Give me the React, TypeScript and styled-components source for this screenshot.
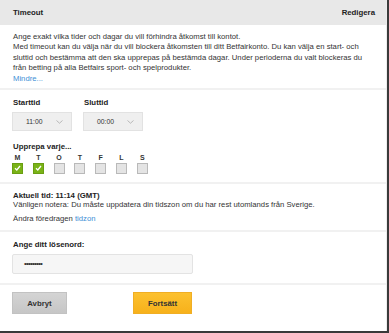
import React from "react";
import styled, { createGlobalStyle } from "styled-components";

const Global = createGlobalStyle`
  html, body { margin: 0; padding: 0; background: #fff; }
  body { font-family: "Liberation Sans", Arial, sans-serif; color: #222; }
`;

const Frame = styled.div`
  box-sizing: border-box;
  width: 389px;
  height: 333px;
  background: #fff;
  border-right: 2px solid #3a3a3a;
  border-bottom: 2px solid #3a3a3a;
  overflow: hidden;
`;

const Panel = styled.div`
  box-sizing: border-box;
  height: 100%;
  border-right: 1px solid #ececec;
`;

const Header = styled.div`
  box-sizing: border-box;
  height: 25px;
  background: #e8e8e8;
  display: flex;
  align-items: center;
  justify-content: space-between;
  padding: 0 11px 0 13px;
  font-size: 7.8px;
  font-weight: bold;
  color: #222;
`;

const Section = styled.div<{ $pt: number; $pb: number; $last?: boolean }>`
  padding: ${(p) => p.$pt}px 4px ${(p) => p.$pb}px 13px;
  border-bottom: ${(p) => (p.$last ? "none" : "2px solid #f1f1f1")};
`;

const Para = styled.p<{ $mt?: number }>`
  margin: ${(p) => p.$mt ?? 0}px 0 0 0;
  font-size: 7.7px;
  line-height: 10.5px;
  color: #333;
  white-space: nowrap;
`;

const Link = styled.a`
  color: #3d8fd6;
  text-decoration: none;
`;

const Label = styled.div<{ $mt?: number; $ml?: number }>`
  margin-top: ${(p) => p.$mt ?? 0}px;
  margin-left: ${(p) => p.$ml ?? 0}px;
  font-size: 7.8px;
  line-height: 9px;
  font-weight: bold;
  color: #222;
`;

const FieldRow = styled.div`
  display: flex;
  gap: 11px;
  margin-left: -1px;
`;

const Field = styled.div`
  display: flex;
  flex-direction: column;
  gap: 5.5px;
`;

const Select = styled.div`
  box-sizing: border-box;
  width: 60px;
  height: 19px;
  background: #efefef;
  border: 1px solid #e2e2e2;
  display: flex;
  align-items: center;
  justify-content: space-between;
  padding: 0 8px 0 13px;
  font-size: 6.8px;
  color: #333;
`;

const Days = styled.div`
  display: flex;
  gap: 9.8px;
  margin-top: 3px;
  margin-left: -1px;
`;

const Day = styled.div`
  width: 11px;
  display: flex;
  flex-direction: column;
  align-items: center;
  gap: 1px;
  font-size: 7px;
  line-height: 8px;
  font-weight: bold;
  color: #333;
`;

const Box = styled.div<{ $on?: boolean }>`
  box-sizing: border-box;
  width: 11px;
  height: 11px;
  background: ${(p) => (p.$on ? "#7ab317" : "#e4e4e4")};
  border: 1px solid ${(p) => (p.$on ? "#6a9e12" : "#b9b9b9")};
  display: flex;
  align-items: center;
  justify-content: center;
`;

const Input = styled.div`
  box-sizing: border-box;
  width: 181px;
  height: 20px;
  margin-top: 5px;
  margin-left: -1px;
  background: #f6f6f6;
  border: 1px solid #e3e3e3;
  border-radius: 2px;
  display: flex;
  align-items: center;
  padding-left: 11px;
  font-size: 8px;
  letter-spacing: -0.8px;
  color: #333;
`;

const Buttons = styled.div`
  display: flex;
  gap: 66px;
  margin-left: -1px;
`;

const Button = styled.div<{ $primary?: boolean }>`
  box-sizing: border-box;
  height: 22px;
  width: ${(p) => (p.$primary ? 59 : 55)}px;
  display: flex;
  align-items: center;
  justify-content: center;
  font-size: 7.8px;
  font-weight: bold;
  color: #333;
  background: ${(p) =>
    p.$primary
      ? "linear-gradient(#fcc12f, #f7b11b)"
      : "linear-gradient(#d4d4d4, #c6c6c6)"};
  border: 1px solid ${(p) => (p.$primary ? "#f0ae25" : "#c2c2c2")};
`;

const Chevron = () => (
  <svg width="7" height="4" viewBox="0 0 7 4">
    <path d="M0.5 0.5 L3.5 3.2 L6.5 0.5" stroke="#aaa" strokeWidth="0.8" fill="none" />
  </svg>
);

const Check = () => (
  <svg width="7" height="6" viewBox="0 0 7 6">
    <path d="M1 3.3 L2.8 5 L6 1" stroke="#fff" strokeWidth="1.3" fill="none" />
  </svg>
);

const days = [
  { l: "M", on: true },
  { l: "T", on: true },
  { l: "O" },
  { l: "T" },
  { l: "F" },
  { l: "L" },
  { l: "S" },
];

export default function App() {
  return (
    <>
      <Global />
      <Frame>
        <Panel>
          <Header>
            <span>Timeout</span>
            <span>Redigera</span>
          </Header>
          <Section $pt={6.5} $pb={4}>
            <Para>
              Ange exakt vilka tider och dagar du vill förhindra åtkomst till kontot.
              <br />
              Med timeout kan du välja när du vill blockera åtkomsten till ditt Betfairkonto. Du kan välja en start- och
              <br />
              sluttid och bestämma att den ska upprepas på bestämda dagar. Under perioderna du valt blockeras du
              <br />
              från betting på alla Betfairs sport- och spelprodukter.
              <br />
              <Link>Mindre...</Link>
            </Para>
          </Section>
          <Section $pt={7.5} $pb={8.5}>
            <FieldRow>
              <Field>
                <Label $ml={1}>Starttid</Label>
                <Select>
                  <span>11:00</span>
                  <Chevron />
                </Select>
              </Field>
              <Field>
                <Label $ml={1}>Sluttid</Label>
                <Select>
                  <span>00:00</span>
                  <Chevron />
                </Select>
              </Field>
            </FieldRow>
            <Label $mt={10.5}>Upprepa varje...</Label>
            <Days>
              {days.map((d, i) => (
                <Day key={i}>
                  <span>{d.l}</span>
                  <Box $on={d.on}>{d.on && <Check />}</Box>
                </Day>
              ))}
            </Days>
          </Section>
          <Section $pt={6.5} $pb={6}>
            <Label>Aktuell tid: 11:14 (GMT)</Label>
            <Para>
              Vänligen notera: Du måste uppdatera din tidszon om du har rest utomlands från Sverige.
            </Para>
            <Para $mt={3.5}>
              Ändra föredragen <Link>tidzon</Link>
            </Para>
          </Section>
          <Section $pt={7.5} $pb={9}>
            <Label>Ange ditt lösenord:</Label>
            <Input>•••••••••</Input>
          </Section>
          <Section $pt={7.5} $pb={8} $last>
            <Buttons>
              <Button>Avbryt</Button>
              <Button $primary>Fortsätt</Button>
            </Buttons>
          </Section>
        </Panel>
      </Frame>
    </>
  );
}
